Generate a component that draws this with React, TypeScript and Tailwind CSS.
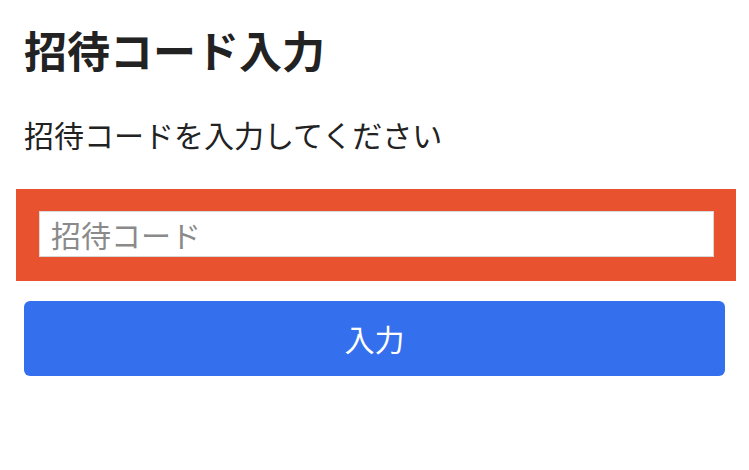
import React from 'react';

const App = () => {
  return (
    <div
      className="min-h-[470px] w-[749px] bg-white px-6 pt-[21px] text-[#222]"
      style={{ fontFamily: '"Noto Sans CJK JP", "Noto Sans", sans-serif' }}
    >
      {/* Heading */}
      <h1 className="text-[43px] font-bold leading-[56px]">招待コード入力</h1>

      {/* Description */}
      <p className="mt-[37px] text-[30px] leading-[40px]">招待コードを入力してください</p>

      {/* Highlighted input */}
      <div className="mt-[35px] -ml-2 mr-[-11px] bg-[#e8522f] pt-[22px] pr-[22px] pb-[24px] pl-[23px]">
        <input
          type="text"
          placeholder="招待コード"
          className="block h-[46px] w-full border border-[#d8d8d8] bg-white pl-[11px] text-[30px] text-[#222] outline-none placeholder:text-[#8a8a8a]"
        />
      </div>

      {/* Submit */}
      <button className="mt-5 flex h-[75px] w-full items-center justify-center rounded-md bg-[#3470ee] text-[30px] text-white">
        入力
      </button>
    </div>
  );
};

export default App;
